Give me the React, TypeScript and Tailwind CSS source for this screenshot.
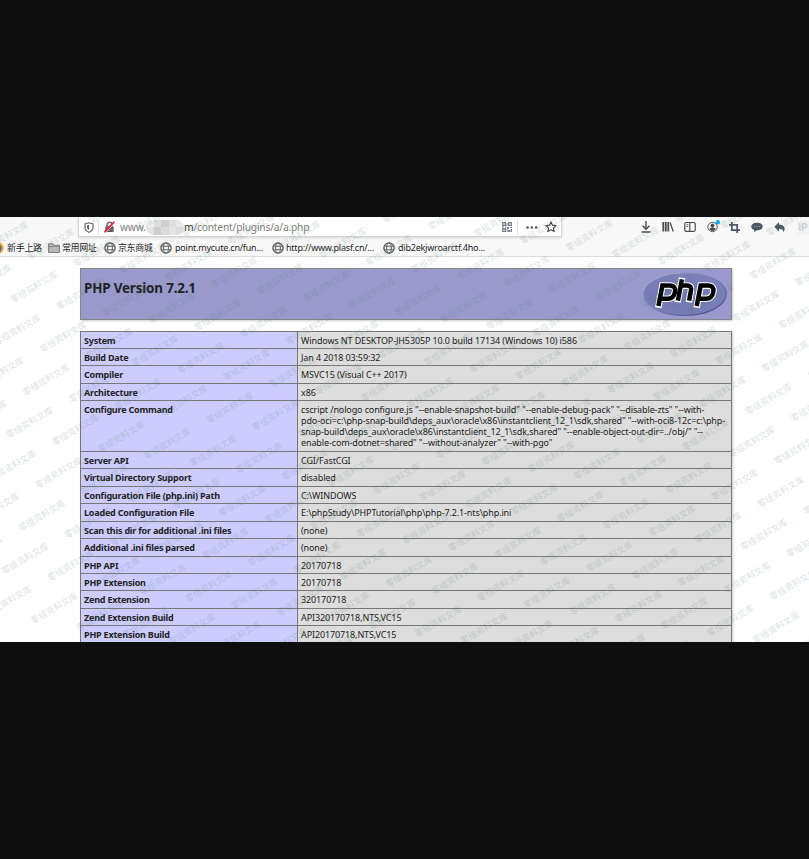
import React from "react";

const rows: [string, string[], string][] = [
  ["System", ["Windows NT DESKTOP-JH5305P 10.0 build 17134 (Windows 10) i586"], "h-[17px]"],
  ["Build Date", ["Jan 4 2018 03:59:32"], "h-[17px]"],
  ["Compiler", ["MSVC15 (Visual C++ 2017)"], "h-[18px]"],
  ["Architecture", ["x86"], "h-[17px]"],
  [
    "Configure Command",
    [
      'cscript /nologo configure.js "--enable-snapshot-build" "--enable-debug-pack" "--disable-zts" "--with-',
      'pdo-oci=c:\\php-snap-build\\deps_aux\\oracle\\x86\\instantclient_12_1\\sdk,shared" "--with-oci8-12c=c:\\php-',
      'snap-build\\deps_aux\\oracle\\x86\\instantclient_12_1\\sdk,shared" "--enable-object-out-dir=../obj/" "--',
      'enable-com-dotnet=shared" "--without-analyzer" "--with-pgo"',
    ],
    "h-[51px]",
  ],
  ["Server API", ["CGI/FastCGI"], "h-[17px]"],
  ["Virtual Directory Support", ["disabled"], "h-[18px]"],
  ["Configuration File (php.ini) Path", ["C:\\WINDOWS"], "h-[17px]"],
  ["Loaded Configuration File", ["E:\\phpStudy\\PHPTutorial\\php\\php-7.2.1-nts\\php.ini"], "h-[18px]"],
  ["Scan this dir for additional .ini files", ["(none)"], "h-[17px]"],
  ["Additional .ini files parsed", ["(none)"], "h-[18px]"],
  ["PHP API", ["20170718"], "h-[17px]"],
  ["PHP Extension", ["20170718"], "h-[17px]"],
  ["Zend Extension", ["320170718"], "h-[18px]"],
  ["Zend Extension Build", ["API320170718,NTS,VC15"], "h-[17px]"],
  ["PHP Extension Build", ["API20170718,NTS,VC15"], "h-[17px]"],
];

function Globe() {
  return (
    <svg className="h-3 w-3 shrink-0" viewBox="0 0 12 12" fill="none" stroke="#58585a" strokeWidth="0.9">
      <circle cx="6" cy="6" r="5.1" strokeWidth="1.3" />
      <ellipse cx="6" cy="6" rx="2.4" ry="5" />
      <path d="M1.2 4.2h9.6M1.2 7.8h9.6" />
    </svg>
  );
}

function Watermarks() {
  const marks: [number, number][] = [];
  for (let m = -22; m < 8; m++)
    for (let n = -9; n < 5; n++) {
      const x = 763.8 + 45.9 * m - 16.8 * n;
      const y = 534.7 + 7 * m + 42.9 * n - 217;
      if (x > -24 && x < 833 && y > -15 && y < 440) marks.push([x, y]);
    }
  return (
    <svg className="pointer-events-none absolute inset-0" width="809" height="425" aria-hidden="true">
      <g
        fill="#4c8060"
        fillOpacity="0.2"
        fontSize="8.8"
        fontWeight="500"
        textAnchor="middle"
        className="font-['Noto_Sans_CJK_SC',sans-serif]"
      >
        {marks.map(([x, y], i) => (
          <text key={i} transform={`translate(${x.toFixed(1)} ${y.toFixed(1)}) rotate(-30.5)`} y="3.2">
            零组资料文库
          </text>
        ))}
      </g>
    </svg>
  );
}

function PhpLogo() {
  return (
    <svg className="h-[46px] w-[88px]" viewBox="0 0 88 46">
      <defs>
        <radialGradient id="oval" cx="0.4" cy="0.6" r="0.8">
          <stop offset="0" stopColor="#7177b0" />
          <stop offset="1" stopColor="#7d82bb" />
        </radialGradient>
        <linearGradient id="rim" x1="0" y1="0" x2="1" y2="1">
          <stop offset="0" stopColor="#b4b6dc" />
          <stop offset="0.5" stopColor="#7a7db8" />
          <stop offset="1" stopColor="#45458c" />
        </linearGradient>
      </defs>
      <ellipse cx="43.5" cy="23" rx="41.6" ry="21.4" fill="url(#oval)" stroke="url(#rim)" strokeWidth="1.3" />
      <g fill="none">
        <g stroke="#fff" strokeWidth="6.6" strokeLinecap="square">
          <path d="M17.9 33.5 21.4 14.6H28.6c4.6 0 6.2 2.6 5.4 6.5S31 27.8 26.5 27.8H19" />
          <path d="M40.5 10 37.2 28M39.7 14.6H46c3.5 0 4.6 1.6 4 4.8L48.4 28" />
          <path d="M56.2 33.5 59.7 14.6H66.9c4.6 0 6.2 2.6 5.4 6.5S69.3 27.8 64.8 27.8H57.3" />
        </g>
        <g stroke="#000" strokeWidth="4.5">
          <path d="M17.4 35 21.4 14.6H28.6c4.6 0 6.2 2.6 5.4 6.5S31 27.8 26.5 27.8H19" />
          <path d="M40.9 8.3 36.9 29.6M39.7 14.6H46c3.5 0 4.6 1.6 4 4.8L48.1 29.6" />
          <path d="M55.7 35 59.7 14.6H66.9c4.6 0 6.2 2.6 5.4 6.5S69.3 27.8 64.8 27.8H57.3" />
        </g>
      </g>
    </svg>
  );
}

function Toolbar() {
  return (
    <div className="flex h-5 w-full items-start">
      <div className="ml-[78px] flex h-[20px] w-[484px] shrink-0 items-center border-x border-b border-[#d4d4d4] bg-white pt-[1px] shadow-sm">
        <svg className="ml-[5px] h-[11px] w-[10px]" viewBox="0 0 10 11" fill="none" stroke="#666">
          <path d="M5 .8 9 2v3.5C9 8 7 9.5 5 10.3 3 9.5 1 8 1 5.5V2Z" strokeWidth="1.2" />
          <path d="M5 2.8v5.5C3.6 7.5 3 6.5 3 5.3V3.3Z" fill="#666" stroke="none" />
        </svg>
        <div className="ml-[4px] h-4 w-px bg-[#e5e5e5]" />
        <svg className="ml-[5px] h-[12px] w-[11px]" viewBox="0 0 11 12" fill="none">
          <path d="M3 5.5V3.8a2.5 2.5 0 0 1 5 0V5.5" stroke="#666" strokeWidth="1.4" />
          <rect x="1.3" y="5.2" width="8.4" height="5.8" rx=".8" fill="#606064" />
          <path d="M1.4 12 11 1.6" stroke="#fff" strokeWidth="1" />
          <path d="M.5 11.3 10.3.8" stroke="#f0214f" strokeWidth="1.7" />
        </svg>
        <div className="ml-[5px] flex items-center whitespace-pre font-['Noto_Sans',sans-serif] text-[10.3px] leading-[15px] tracking-[-0.23px] text-[#808080]">
          <span className="w-[26px]">www.</span>
          <div className="grid h-[15px] w-[38px] grid-cols-5 overflow-hidden rounded-full">
            <i className="bg-[#efeff0]" /><i className="bg-[#dcdcde]" /><i className="bg-[#cfcfd1]" /><i className="bg-[#dededf]" /><i className="bg-[#e8e8e9]" />
            <i className="bg-[#e2e2e3]" /><i className="bg-[#cececf]" /><i className="bg-[#dadadb]" /><i className="bg-[#e4e4e5]" /><i className="bg-[#dcdcdd]" />
          </div>
          <span><span className="text-[#333]">m</span>/content/plugins/a/a.php</span>
        </div>
        <svg className="ml-auto h-[10px] w-[10px]" viewBox="0 0 10 10" fill="#76808a">
          <path d="M0 0h4v4H0zM6 0h4v4H6zM0 6h4v4H0zM5 5h2v2H5zM8 5h2v1H8zM6 8h2v2H6zM8.5 7H10v3H8.5zM4.5 1h1v3h-1zM0 4.6h2v.8H0zM3 4.6h1.5v1H3zM4.6 7h.9v3h-.9z" />
          <path d="M1.3 1.3h1.4v1.4H1.3zM7.3 1.3h1.4v1.4H7.3zM1.3 7.3h1.4v1.4H1.3z" fill="#fff" />
        </svg>
        <div className="ml-[5px] h-4 w-px bg-[#e5e5e5]" />
        <svg className="ml-[8px] h-[3px] w-[12px]" viewBox="0 0 12 3" fill="#555"><circle cx="1.5" cy="1.5" r="1.3" /><circle cx="5.8" cy="1.5" r="1.3" /><circle cx="10.1" cy="1.5" r="1.3" /></svg>
        <svg className="ml-[7px] mr-[4px] h-[12px] w-[12px]" viewBox="0 0 12 12" fill="none" stroke="#4a4a4a" strokeWidth="1.2" strokeLinejoin="round">
          <path d="m6 .9 1.5 3.3 3.6.4-2.7 2.4.8 3.6L6 8.8l-3.2 1.8.8-3.6L.9 4.6l3.6-.4Z" />
        </svg>
      </div>
      <div className="ml-[78px] flex h-5 items-center gap-[10px]">
        <svg className="h-3 w-3" viewBox="0 0 12 12" fill="none" stroke="#4c4c4e" strokeWidth="1.4"><path d="M6 0v8M2.5 4.8 6 8.2l3.5-3.4M1.5 11h9" /></svg>
        <svg className="h-3 w-3" viewBox="0 0 12 12" fill="none" stroke="#4c4c4e"><path d="M1.3 1v9.5M3.8 1v9.5M6.3 1v9.5" strokeWidth="1.8" /><path d="M8.2 1.5l3 9" strokeWidth="1.3" /></svg>
        <svg className="h-3 w-3" viewBox="0 0 12 12" fill="none" stroke="#4c4c4e" strokeWidth="1.2"><rect x=".8" y="1.5" width="10.4" height="8.8" rx="1.2" /><path d="M5.8 1.5v9" /><path d="M2.3 3.7h2M2.3 5.5h2" strokeWidth=".8" /></svg>
      </div>
      <div className="ml-[11px] flex h-5 items-center gap-[10px]">
        <svg className="h-4 w-[14px]" viewBox="0 0 14 16" fill="none"><circle cx="5.5" cy="8" r="4.7" stroke="#5c5c5e" strokeWidth="1" /><circle cx="5.5" cy="6.5" r="1.9" fill="#4c4c4e" /><path d="M2.3 10c1-2 5.4-2 6.4 0-1.5 2.5-5 2.5-6.400 0Z" fill="#4c4c4e" /><circle cx="10.8" cy="3.2" r="2.2" fill="#10a8f5" /></svg>
        <svg className="-ml-[2px] h-[11px] w-[11px]" viewBox="0 0 11 11" fill="none" stroke="#4c5866" strokeWidth="1.8"><path d="M0 2.8h8.2V11M2.8 0v8.2H11" /></svg>
        <svg className="ml-[1px] h-[11px] w-3" viewBox="0 0 12 11"><path d="M6 .7c3.3 0 5.7 1.6 5.7 3.7S9.3 8.3 6 8.3L3 10.3l.4-2.2C1.5 7.5.3 6.2.3 4.5.3 2.3 2.7.7 6 .7Z" fill="#4c5866" /><path d="M3.3 4.5h1M5.5 4.5h1M7.7 4.5h1" stroke="#a9b0b8" /></svg>
        <svg className="ml-[1px] h-[11px] w-3" viewBox="0 0 12 11"><path d="M5 .3v2.5c4.8 0 7.4 3.2 4.2 7.5.2-2.600-1-3.500-4.200-3.500v2.600L.3 4.700Z" fill="#4c5866" /></svg>
      </div>
      <div className="ml-[11px] mt-[4px] flex h-[13px] w-3 items-center justify-center bg-[#f2f2f2] font-['Roboto',sans-serif] text-[10px] font-bold leading-[13px] text-[#cfcfd1]">IP</div>
    </div>
  );
}

export default function App() {
  return (
    <div className="h-[859px] w-[809px] overflow-hidden bg-[#0e0e0e] pt-[217px] font-['Noto_Sans','Noto_Sans_CJK_SC',sans-serif]">
      <div className="relative h-[425px] w-[809px] overflow-hidden bg-white">
        <div className="h-10 overflow-hidden border-b border-[#dcdcde] bg-[#f8f8f8]">
          <Toolbar />
          <div className="flex h-[22px] items-center whitespace-nowrap text-[9px] tracking-[-0.22px] text-[#1c1c1e]">
            <svg className="h-3 w-[4px] shrink-0" viewBox="0 0 4 12"><circle cx="-2" cy="6" r="5.6" fill="#f9a01b" /><circle cx="-3" cy="6.5" r="4.5" fill="#2d6cdf" /></svg>
            <span className="ml-[3px] w-[41px] leading-[14px] tracking-[-0.3px]">新手上路</span>
            <svg className="h-[10px] w-3 shrink-0" viewBox="0 0 12 10" fill="#b9b9bb" stroke="#77777a"><path d="M.6 9.4V.8h4l1 1.4h5.8v7.2Z" /><path d="M.6 3.5h10.8" strokeWidth=".7" /></svg>
            <span className="ml-[2px] w-[42px] leading-[14px] tracking-[-0.4px]">常用网址</span>
            <Globe />
            <span className="ml-[2px] w-[42px] leading-[14px] tracking-[-0.4px]">京东商城</span>
            <Globe />
            <span className="ml-[3px] w-[97px] leading-[14px]">point.mycute.cn/fun...</span>
            <Globe />
            <span className="ml-[2px] w-[97px] leading-[14px]">http://www.plasf.cn/...</span>
            <Globe />
            <span className="ml-[3px] leading-[14px]">dib2ekjwroarctf.4ho...</span>
          </div>
        </div>
        <div className="ml-[80px] mt-[11px] flex h-[52px] w-[652px] justify-between border border-[#868688] bg-[#9999cc] shadow-[1px_1px_2px_#ccc]">
          <h1 className="ml-[3px] mt-[10px] text-[13.4px] font-bold leading-[18px] tracking-[-0.16px] text-[#222]">PHP Version 7.2.1</h1>
          <div className="mr-[2px] mt-[2px]"><PhpLogo /></div>
        </div>
        <div className="ml-[80px] mt-[11px] w-[652px] border-r border-[#777] text-[9px] leading-[11.2px] text-[#222] shadow-[1px_1px_2px_#ccc]">
          {rows.map(([k, v, h]) => (
            <div key={k} className={`flex border-l border-t border-[#777] ${h}`}>
              <div className="w-[216px] shrink-0 bg-[#ccccff] pl-[3px] pt-[2.5px] font-bold tracking-[-0.21px]">{k}</div>
              <div className="min-w-0 flex-1 whitespace-pre border-l border-[#777] bg-[#dddddd] pl-[3px] pt-[2.5px] tracking-[-0.12px]">
                {v.map((line) => <div key={line}>{line}</div>)}
              </div>
            </div>
          ))}
        </div>
        <Watermarks />
      </div>
    </div>
  );
}
